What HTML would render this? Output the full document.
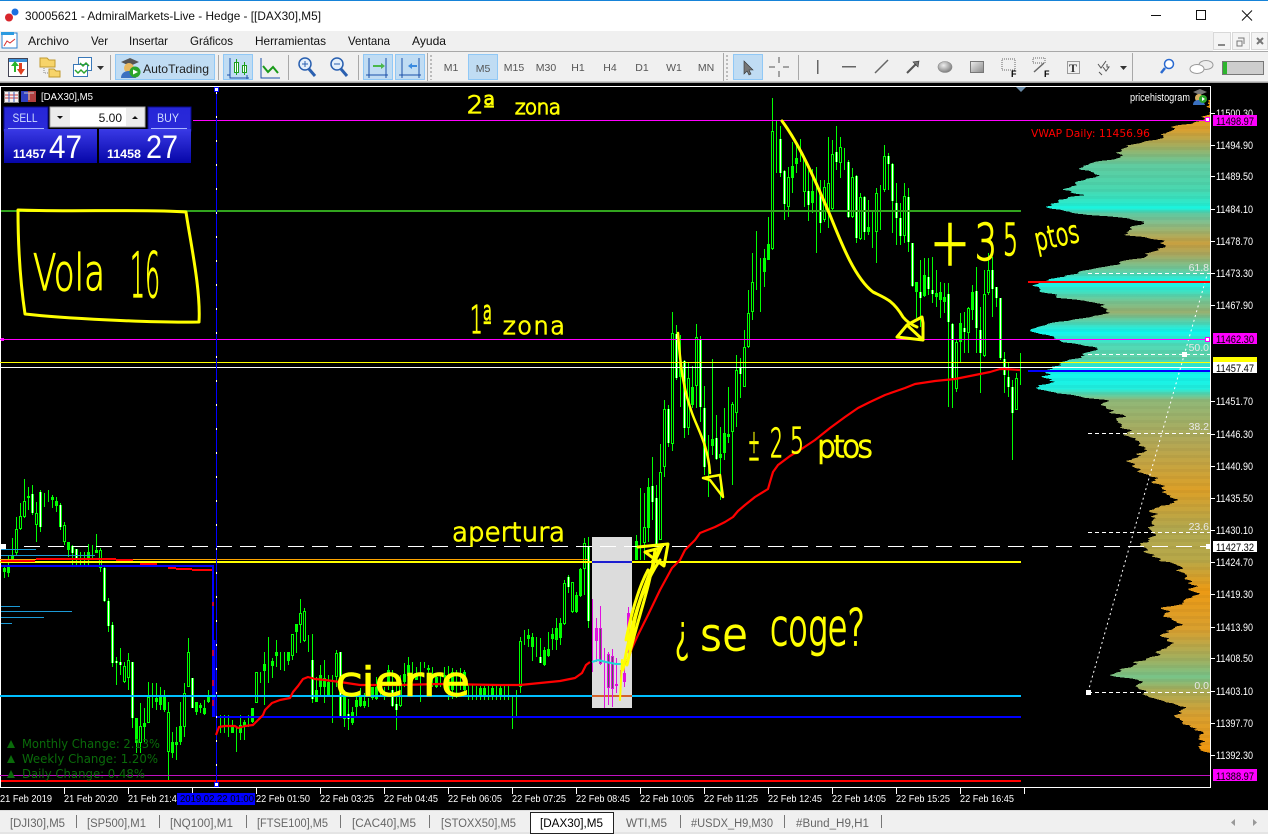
<!DOCTYPE html>
<html>
<head>
<meta charset="utf-8">
<title>30005621 - AdmiralMarkets-Live - Hedge</title>
<style>
html,body{margin:0;padding:0;background:#000;width:1268px;height:834px;overflow:hidden}
svg{display:block}
text{font-family:"Liberation Sans",sans-serif;white-space:pre}
.ax{font-size:11px;fill:#fff}
.tm{font-size:10.5px;fill:#fff}
.mn{font-size:12px;fill:#111}
.tf{font-size:10.5px;fill:#555}
.tb{font-size:11.5px;fill:#666}
.hw{font-family:"DejaVu Sans",sans-serif;font-weight:200;fill:#ff0;stroke:#ff0;stroke-width:1.2}
.cs{shape-rendering:crispEdges}
</style>
</head>
<body>
<svg width="1268" height="834" viewBox="0 0 1268 834" xmlns="http://www.w3.org/2000/svg">
<defs>
<linearGradient id="hg" gradientUnits="userSpaceOnUse" x1="0" y1="97" x2="0" y2="753">
<stop offset=".005" stop-color="#ee9a10"/><stop offset=".05" stop-color="#d9a030"/><stop offset=".073" stop-color="#a8ab5a"/><stop offset=".104" stop-color="#60cca0"/><stop offset=".142" stop-color="#48d8b0"/><stop offset=".16" stop-color="#30e8c8"/><stop offset=".169" stop-color="#18f5e0"/><stop offset=".178" stop-color="#60c8a0"/><stop offset=".19" stop-color="#80c090"/><stop offset=".223" stop-color="#c8a040"/><stop offset=".241" stop-color="#a8a860"/><stop offset=".267" stop-color="#60d0a8"/><stop offset=".282" stop-color="#10f8f0"/><stop offset=".297" stop-color="#40e0c0"/><stop offset=".309" stop-color="#70c898"/><stop offset=".328" stop-color="#98b070"/><stop offset=".358" stop-color="#10f8f0"/><stop offset=".378" stop-color="#50dcb8"/><stop offset=".398" stop-color="#60d0a8"/><stop offset=".416" stop-color="#10f8f0"/><stop offset=".444" stop-color="#20f0e0"/><stop offset=".462" stop-color="#90b878"/><stop offset=".523" stop-color="#b0a858"/><stop offset=".599" stop-color="#dca028"/><stop offset=".66" stop-color="#b0a850"/><stop offset=".706" stop-color="#b8a848"/><stop offset=".752" stop-color="#ec9a14"/><stop offset=".813" stop-color="#d8a030"/><stop offset=".858" stop-color="#a0b060"/><stop offset=".884" stop-color="#78c488"/><stop offset=".904" stop-color="#a8ac58"/><stop offset=".942" stop-color="#d8a030"/><stop offset=".995" stop-color="#f09810"/>
</linearGradient>
<linearGradient id="bb" x1="0" y1="0" x2="0" y2="1"><stop offset="0" stop-color="#3a3ae6"/><stop offset="1" stop-color="#0606a8"/></linearGradient>
<linearGradient id="bt" x1="0" y1="0" x2="0" y2="1"><stop offset="0" stop-color="#2626d8"/><stop offset="1" stop-color="#2a2ad8"/></linearGradient>
<linearGradient id="gb" x1="0" y1="0" x2="1" y2="1"><stop offset="0" stop-color="#eee"/><stop offset="1" stop-color="#888"/></linearGradient>
<radialGradient id="el" cx=".4" cy=".35" r=".7"><stop offset="0" stop-color="#eee"/><stop offset="1" stop-color="#777"/></radialGradient>
<pattern id="st" width="4" height="7" patternUnits="userSpaceOnUse"><rect width="4" height="3" fill="#000" fill-opacity=".035"/></pattern>
<filter id="jag" filterUnits="userSpaceOnUse" x="1000" y="90" width="260" height="680" color-interpolation-filters="sRGB">
<feTurbulence type="fractalNoise" baseFrequency="0.002 0.3" numOctaves="2" seed="4" result="n"/>
<feColorMatrix in="n" type="matrix" values="1 0 0 0 0  0 0 0 0 .5  0 0 0 0 0  0 0 0 0 1" result="m"/>
<feDisplacementMap in="SourceGraphic" in2="m" scale="22" xChannelSelector="R" yChannelSelector="G"/>
</filter>
<clipPath id="hc"><rect x="1000" y="90" width="210" height="680"/></clipPath>
</defs>

<!-- window chrome -->
<rect width="1268" height="834" fill="#000"/>
<rect width="1268" height="31" fill="#fff"/>
<rect width="1268" height="1" fill="#1683d8"/>
<circle cx="9" cy="17.5" r="4" fill="#d8262c"/><circle cx="15" cy="12" r="3.5" fill="#1b6fe0"/>
<text x="25" y="20" font-size="12" fill="#111" textLength="296" lengthAdjust="spacingAndGlyphs">30005621 - AdmiralMarkets-Live - Hedge - [[DAX30],M5]</text>
<path class="cs" d="M1151 15.5H1161" stroke="#111" fill="none"/>
<rect class="cs" x="1196.5" y="10.5" width="9" height="9" fill="none" stroke="#111"/>
<path d="M1242 10.5L1252 20.5M1252 10.5L1242 20.5" stroke="#111" fill="none"/>

<rect y="31" width="1268" height="52" fill="#f0f0f0"/>
<rect x="1213" y="31" width="55" height="20" fill="#fff"/>
<g class="cs" fill="#f4f4f4" stroke="#d8d8d8"><rect x="1213.5" y="32.5" width="17" height="17"/><rect x="1232.5" y="32.5" width="17" height="17"/><rect x="1251.5" y="32.5" width="16" height="17"/></g>
<path class="cs" d="M1218 45h7" stroke="#888" stroke-width="2"/>
<path d="M1238 38h6v6M1237 41h5v5h-5z" fill="none" stroke="#777"/>
<path d="M1257 38l6 6M1263 38l-6 6" stroke="#777" stroke-width="2"/>
<rect y="51" width="1268" height="1" fill="#a8a8a8"/>
<rect y="82" width="1268" height="1" fill="#a0a0a0"/>
<rect y="81" width="1268" height="1" fill="#c8c8c8"/>
<rect y="83" width="1268" height="3" fill="#000"/>
<!-- menu -->
<g>
<rect x="2" y="33" width="15" height="15" fill="#fff" stroke="#2a7fd0"/><rect x="1" y="32" width="13" height="3" fill="#2a9ae0"/><path d="M4 46l3-5 3 2 5-4" stroke="#d83030" fill="none"/>
<text class="mn" x="28" y="45" textLength="41" lengthAdjust="spacingAndGlyphs">Archivo</text><text class="mn" x="91" y="45" textLength="17" lengthAdjust="spacingAndGlyphs">Ver</text><text class="mn" x="129" y="45" textLength="39" lengthAdjust="spacingAndGlyphs">Insertar</text><text class="mn" x="190" y="45" textLength="43" lengthAdjust="spacingAndGlyphs">Gráficos</text><text class="mn" x="255" y="45" textLength="71" lengthAdjust="spacingAndGlyphs">Herramientas</text><text class="mn" x="348" y="45" textLength="42" lengthAdjust="spacingAndGlyphs">Ventana</text><text class="mn" x="412" y="45" textLength="34" lengthAdjust="spacingAndGlyphs">Ayuda</text>
</g>
<!-- toolbar -->
<g class="cs" fill="#c0dcf3" stroke="#90c8f6">
<rect x="115.5" y="54.5" width="99" height="25"/><rect x="223.5" y="54.5" width="29" height="25"/><rect x="363.5" y="54.5" width="29" height="25"/><rect x="395.5" y="54.5" width="29" height="25"/><rect x="468.5" y="54.5" width="29" height="25"/><rect x="733.5" y="54.5" width="29" height="25"/>
</g>
<g class="cs" fill="#a8a8a8"><rect x="110" y="55" width="1" height="25"/><rect x="218" y="55" width="1" height="25"/><rect x="288" y="55" width="1" height="25"/><rect x="358" y="55" width="1" height="25"/><rect x="723" y="53" width="1" height="28"/><rect x="798" y="55" width="1" height="25"/><rect x="1132" y="53" width="1" height="28"/><rect x="427" y="53" width="1" height="28"/></g>
<path class="cs" d="M431 55v25M727 55v25" stroke="#bbb" stroke-dasharray="2 2" stroke-width="2"/>
<!-- new chart -->
<rect x="8.5" y="58.5" width="19" height="18" fill="#fff" stroke="#445"/><rect x="9" y="59" width="18" height="3" fill="#3a8fd8"/>
<path d="M14 72v-6h-3l4-5 4 5h-3v6z" fill="#2cb52c"/><path d="M19 63h3v6h3l-4 6-4-6h2z" fill="#e04020"/>
<!-- folders -->
<path d="M40 58h7l2 2h6v7H40z" fill="#f7d46a" stroke="#c09a30"/><path d="M49 69h5l2 2h4v6H49z" fill="#f7d46a" stroke="#c09a30"/><path d="M44 68v5h4" stroke="#888" stroke-dasharray="1 1" fill="none"/>
<!-- templates -->
<rect x="78.5" y="57.5" width="13" height="13" fill="#fff" stroke="#3a78b8"/><rect x="73.5" y="64.5" width="14" height="12" fill="#fff" stroke="#3a78b8"/><path d="M75 70l3 3 3-3 3 3 3-3M80 63l3 3 3-3 3 3" stroke="#2ca52c" fill="none" stroke-width="1.5"/>
<path d="M97 66h7l-3.500 4z" fill="#333"/>
<!-- autotrading -->
<path d="M121 62l9-4 9 4-9 4z" fill="#555"/><circle cx="129" cy="68" r="5" fill="#e8b860"/><path d="M121 78c0-5 4-7 8-7s6 3 7 7z" fill="#3a70c0"/><circle cx="135" cy="72" r="5.500" fill="#2aa52a"/><path d="M133 69.500l5 2.500-5 2.500z" fill="#fff"/>
<text x="143" y="73" font-size="12" fill="#222" textLength="66" lengthAdjust="spacingAndGlyphs">AutoTrading</text>
<!-- chart type icons -->
<path d="M230 58v20h19M227 75h3M247 75v4" stroke="#1a4fa8" fill="none"/>
<g fill="#fff" stroke="#1fa01f"><rect x="234.500" y="62.500" width="4" height="10"/><rect x="242.500" y="65.500" width="4" height="7"/></g><path d="M236.500 59v16M244.500 62v13" stroke="#1fa01f"/>
<path d="M261 58v20h19" stroke="#1a4fa8" fill="none"/><path d="M263 66l5 6 5-5 5 6" stroke="#1a9a1a" stroke-width="2" fill="none"/>
<!-- zoom -->
<circle cx="305" cy="64" r="6" fill="#e4f0fb" stroke="#2a60b0" stroke-width="1.500"/><path d="M309 69l6 7" stroke="#2a60b0" stroke-width="3"/><path d="M302 64h6M305 61v6" stroke="#2a60b0"/>
<circle cx="337" cy="64" r="6" fill="#e4f0fb" stroke="#2a60b0" stroke-width="1.500"/><path d="M341 69l6 7" stroke="#2a60b0" stroke-width="3"/><path d="M334 64h6" stroke="#2a60b0"/>
<path d="M369 58v20M366 75h22M386 58v20" stroke="#1a4fa8" fill="none"/><path d="M373 65h8v-2l4 3-4 3v-2h-8z" fill="#4ab84a"/>
<path d="M402 58v20M399 75h22M419 58v20" stroke="#1a4fa8" fill="none"/><path d="M417 65h-5v-2l-4 3 4 3v-2h5z" fill="#3a8ae0"/>
<!-- timeframes -->
<g text-anchor="middle"><text class="tf" x="451" y="71">M1</text><text class="tf" x="483" y="72">M5</text><text class="tf" x="514" y="71">M15</text><text class="tf" x="546" y="71">M30</text><text class="tf" x="578" y="71">H1</text><text class="tf" x="610" y="71">H4</text><text class="tf" x="642" y="71">D1</text><text class="tf" x="674" y="71">W1</text><text class="tf" x="706" y="71">MN</text></g>
<!-- tools -->
<path d="M744 61v13l3-3 2 4 2-1-2-4h4z" fill="#777" stroke="#333" stroke-width=".6"/>
<path class="cs" d="M769 67h6M783 67h6M779 57v6M779 71v6" stroke="#555"/>
<rect x="817" y="60" width="1.500" height="14" fill="#666"/><rect x="842" y="66" width="14" height="1.500" fill="#666"/>
<path d="M875 73l13-13" stroke="#666" stroke-width="1.500"/>
<path d="M907 73l10-10" stroke="#555" stroke-width="2"/><path d="M919 61l-6 1 5 5z" fill="#777" stroke="#333" stroke-width=".6"/>
<ellipse cx="945" cy="67" rx="7" ry="5.500" fill="url(#el)" stroke="#888" stroke-width=".6"/>
<rect x="970.500" y="61.500" width="13" height="11" fill="url(#gb)" stroke="#777"/>
<rect x="1002" y="59" width="13" height="11" fill="none" stroke="#666" stroke-dasharray="1 1"/><text x="1011" y="77" font-size="9" font-weight="bold" fill="#000">F</text>
<rect x="1033" y="58" width="12" height="5" fill="none" stroke="#666" stroke-dasharray="1 1"/><path d="M1034 72l10-9" stroke="#666" stroke-width="1.500"/><text x="1044" y="77" font-size="9" font-weight="bold" fill="#000">F</text>
<rect x="1067.500" y="61.500" width="12" height="12" fill="none" stroke="#444" stroke-dasharray="1 1"/><text x="1069" y="72" font-size="12" font-weight="bold" style="font-family:'Liberation Serif',serif" fill="#333">T</text>
<path d="M1098 64l3 4 5-7M1103 67l3 4 3-4h-2v-3M1099 72l3 3" stroke="#555" fill="none"/>
<path d="M1120 66h7l-3.500 4z" fill="#333"/>
<circle cx="1169" cy="64" r="4.500" fill="#fff" stroke="#2a6ad0" stroke-width="1.500"/><path d="M1165 68l-4 5" stroke="#2a6ad0" stroke-width="2.500"/>
<ellipse cx="1206" cy="65" rx="7" ry="4.500" fill="#eee" stroke="#999"/><ellipse cx="1197" cy="69" rx="7" ry="4.500" fill="#fff" stroke="#999"/>
<rect x="1222.500" y="61.500" width="41" height="13" fill="#cdcdcd" stroke="#777"/><rect x="1223" y="62" width="4" height="12" fill="#2db52d"/>

<!-- chart frame -->
<g class="cs">
<rect y="86" width="1211" height="1" fill="#fff"/><rect y="87" width="1" height="701" fill="#fff"/><rect x="1210" y="86" width="1" height="702" fill="#fff"/><rect y="787" width="1211" height="1" fill="#fff"/>
</g>

<!-- candles -->
<g class="cs" transform="translate(.5 0)" fill="none">
<path stroke="#0f0" d="M4 567V578M8 555V577M12 538V563M16 517V555M20 503V530M24 479V518M28 487V510M32 485V515M36 502V542M40 490V532M44 493V507M48 490V502M52 495V508M56 497V512M60 503V530M64 522V545M68 542V557M72 545V565M76 549V565M80 552V565M84 552V565M88 544V565M92 545V560M96 534V553M100 548V572M104 567V602M108 598V632M112 622V667M116 657V685M120 648V675M124 662V683M128 653V690M132 662V728M136 718V753M140 703V753M144 708V742M148 682V723M152 683V708M156 683V710M160 687V710M164 690V712M168 702V780M172 732V758M176 727V760M180 702V745M184 683V737M188 638V687M192 678V708M196 702V715M200 703V713M204 700V715M208 690V703M212 690V700M216 720V733M220 715V733M224 715V733M228 715V737M232 720V733M236 727V752M240 715V740M244 720V740M248 715V727M252 708V723M256 672V703M260 672V683M264 652V705M268 637V683M272 658V678M276 640V667M280 652V670M284 652V671M288 652V665M292 635V660M296 625V653M300 599V643M304 608V642M308 635V652M312 634V703M316 677V702M320 665V695M324 660V703M328 675V697M332 675V723M336 650V687M340 652V718M344 690V727M348 699V730M352 707V725M356 697V718M360 688V707M364 693V708M368 698V707M372 687V700M376 677V700M380 682V695M384 687V700M388 665V690M392 670V707M396 683V730M400 675V707M404 663V687M408 657V687M412 662V680M416 667V680M420 662V702M424 662V668M428 665V677M432 667V687M436 673V688M440 673V687M444 667V680M448 666V700M452 668V699M456 670V698M460 668V690M464 670V695M468 684V700M472 684V700M476 686V700M480 686V700M484 686V700M488 686V700M492 686V700M496 686V700M500 686V700M504 686V700M508 686V700M512 697V729M516 690V717M520 637V693M524 630V645M528 629V647M532 633V661M536 637V657M540 638V663M544 647V666M548 632V657M552 628V650M556 618V650M560 618V645M564 580V625M568 575V593M572 582V613M576 592V613M580 568V597M584 538V595M588 537V628M636 535V560M640 488V560M644 493V560M648 478V542M652 457V520M656 485V547M660 444V540M664 400V477M668 405V447M672 312V451M676 325V380M680 335V407M684 360V438M688 363V435M692 366V408M696 324V408M700 336V422M704 386V475M708 435V497M712 359V455M716 415V460M720 427V500M724 408V460M728 387V443M732 402V485M736 355V427M740 358V398M744 330V387M748 290V348M752 253V320M756 231V290M760 258V312M764 249V287M768 217V260M772 98V250M776 120V173M780 126V177M784 170V220M788 167V217M792 142V193M796 145V173M800 139V162M804 157V207M808 170V221M812 169V213M816 167V253M820 180V233M824 180V222M828 137V228M832 140V210M836 126V170M840 137V178M844 148V170M848 160V218M852 168V218M856 175V243M860 193V240M864 196V240M868 200V235M872 210V248M876 188V263M880 185V230M884 145V192M888 153V190M892 163V233M896 183V245M900 203V245M904 183V243M908 188V252M912 243V287M916 282V318M920 260V327M924 258V297M928 258V295M932 257V303M936 270V307M940 282V318M944 283V313M948 283V407M952 323V408M956 340V392M960 313V362M964 312V353M968 307V353M972 285V320M976 267V353M980 307V393M984 270V357M988 253V295M992 257V317M996 287V307M1000 298V360M1004 352V393M1008 362V397M1012 380V460M1016 373V410M1020 353V385"/>
<!-- hollow -->
<path stroke="#0f0" stroke-width="3" d="M4 568V572M8 567V573M12 555V560M16 529V553M20 516V529M24 501V517M28 496V498M36 513V525M52 497V500M56 501V506M64 525V542M68 542V550M88 552V560M96 550V553M100 550V568M124 666V682M128 660V678M136 718V743M140 726V743M144 723V727M148 697V723M156 698V702M160 697V705M164 697V710M168 712V752M172 742V753M176 742V745M180 726V742M184 693V727M188 652V687M196 702V712M200 705V708M204 708V714M208 696V702M232 725V733M240 725V733M244 722V727M252 708V722M256 672V703M264 664V671M272 661V666M276 652V656M288 652V661M292 634V656M296 624V632M300 613V625M304 611V641M316 690V702M320 675V687M324 678V687M328 682V697M336 653V677M344 696V719M352 712V723M356 700V707M360 697V706M364 701V706M372 687V698M376 687V699M380 688V692M388 670V682M400 683V706M404 674V682M408 665V676M416 673V680M428 668V670M436 677V687M444 675V677M448 680V690M452 672V690M464 672V690M480 688V697M484 688V697M492 688V697M500 688V697M520 641V687M528 635V639M532 637V647M544 650V665M548 649V656M552 634V639M556 628V640M560 623V638M564 583V624M572 582V612M576 595V612M580 569V596M584 543V569M636 541V560M644 527V543M648 487V528M660 472V540M664 409V467M672 333V444M680 363V377M688 378V428M692 387V405M696 337V386M712 439V446M720 454V458M724 433V453M728 434V437M732 404V432M736 370V413M744 347V387M748 313V347M752 282V312M764 258V272M768 244V260M772 131V249M788 177V207M792 166V178M796 158V164M804 158V192M812 191V203M824 187V220M828 183V212M832 154V209M840 147V163M852 177V217M860 197V239M868 227V232M876 193V232M884 156V190M904 196V236M916 282V292M924 275V296M936 293V297M940 292V300M944 297V302M956 342V389M960 323V342M968 308V333M972 292V310M984 294V356M988 270V293M1016 378V410"/>
<path stroke="#000" d="M16 530V552M20 517V528M24 502V516M36 514V524M64 526V541M100 551V567M124 667V681M128 661V677M140 727V742M148 698V722M168 713V751M184 694V726M188 653V686M256 673V702M292 635V655M300 614V624M304 612V640M336 654V676M400 684V705M520 642V686M564 584V623M572 583V611M584 544V568M644 528V542M660 473V539M664 410V466M672 334V443M688 379V427M696 338V385M732 405V431M736 371V412M744 348V386M748 314V346M752 283V311M772 132V248M788 178V206M804 159V191M824 188V219M828 184V211M832 155V208M840 148V162M852 178V216M860 198V238M876 194V231M884 157V189M904 197V235M956 343V388M968 309V332M984 295V355M988 271V292M1016 379V409"/>
<!-- white -->
<path stroke="#0f0" stroke-width="3" d="M32 494V513M40 492V527M60 505V527M72 546V553M76 549V560M104 568V601M108 601V626M112 625V663M116 661V663M120 662V665M132 662V718M192 678V708M340 652V717M312 660V699M348 714V719M396 704V710M392 690V706M540 657V663M568 577V587M588 546V621M652 486V502M656 498V545M668 409V443M676 334V378M684 361V428M700 339V407M704 408V467M716 438V459M740 368V374M780 139V173M784 171V204M808 191V205M820 193V223M836 152V162M848 162V217M856 176V238M864 197V232M888 156V164M892 164V201M896 203V218M900 218V236M908 197V242M912 243V286M920 292V298M928 277V289M932 290V294M948 294V322M952 324V378M964 328V332M976 291V328M980 330V353M992 270V289M996 287V298M1000 298V358M1004 359V375M1008 377V387M1012 387V413"/>
<path stroke="#fff" d="M32 494V513M40 492V527M60 505V527M72 546V553M76 549V560M104 568V601M108 601V626M112 625V663M116 661V663M120 662V665M132 662V718M192 678V708M340 652V717M312 660V699M348 714V719M396 704V710M392 690V706M540 657V663M568 577V587M588 546V621M652 486V502M656 498V545M668 409V443M676 334V378M684 361V428M700 339V407M704 408V467M716 438V459M740 368V374M780 139V173M784 171V204M808 191V205M820 193V223M836 152V162M848 162V217M856 176V238M864 197V232M888 156V164M892 164V201M896 203V218M900 218V236M908 197V242M912 243V286M920 292V298M928 277V289M932 290V294M948 294V322M952 324V378M964 328V332M976 291V328M980 330V353M992 270V289M996 287V298M1000 298V358M1004 359V375M1008 377V387M1012 387V413"/>
</g>

<!-- histogram -->
<g clip-path="url(#hc)"><g filter="url(#jag)" shape-rendering="crispEdges">
<path fill="url(#hg)" d="M1240 97H1208V115H1203V120H1200L1173 128 1160 137 1150 140 1130 145 1120 150 1120 153 1128 155 1100 162 1077 168 1090 172 1100 175 1083 180 1063 190 1083 195 1060 200 1047 207 1060 210 1087 215 1123 218 1150 222 1128 228 1130 235 1167 242 1163 250 1140 257 1113 265 1093 270 1070 275 1047 280 1032 285 1043 292 1063 298 1100 303 1103 308 1113 313 1083 318 1050 323 1027 331 1047 335 1063 342 1100 348 1083 355 1063 362 1048 370 1043 377 1057 382 1032 388 1057 393 1103 400 1107 410 1123 417 1113 420 1127 430 1133 440 1147 450 1133 458 1130 462 1143 470 1153 480 1163 490 1177 500 1153 512 1152 523 1155 537 1140 545 1155 557 1180 568 1187 580 1197 593 1183 602 1163 610 1172 620 1180 627 1160 637 1173 643 1155 655 1128 667 1112 677 1143 680 1140 688 1150 697 1180 707 1175 718 1193 727 1203 737 1203 750 1210 753H1240Z"/>
<path fill="url(#st)" d="M1240 97H1208V115H1203V120H1200L1173 128 1160 137 1150 140 1130 145 1120 150 1120 153 1128 155 1100 162 1077 168 1090 172 1100 175 1083 180 1063 190 1083 195 1060 200 1047 207 1060 210 1087 215 1123 218 1150 222 1128 228 1130 235 1167 242 1163 250 1140 257 1113 265 1093 270 1070 275 1047 280 1032 285 1043 292 1063 298 1100 303 1103 308 1113 313 1083 318 1050 323 1027 331 1047 335 1063 342 1100 348 1083 355 1063 362 1048 370 1043 377 1057 382 1032 388 1057 393 1103 400 1107 410 1123 417 1113 420 1127 430 1133 440 1147 450 1133 458 1130 462 1143 470 1153 480 1163 490 1177 500 1153 512 1152 523 1155 537 1140 545 1155 557 1180 568 1187 580 1197 593 1183 602 1163 610 1172 620 1180 627 1160 637 1173 643 1155 655 1128 667 1112 677 1143 680 1140 688 1150 697 1180 707 1175 718 1193 727 1203 737 1203 750 1210 753H1240Z"/>
</g></g>

<!-- fib -->
<g class="cs" stroke="#fff" fill="none" stroke-dasharray="4 3">
<path d="M1088 273.500H1210M1088 354.500H1210M1088 433.500H1210M1088 532.500H1210M1088 692.500H1210"/>
</g>
<path d="M1088 692L1207 275" stroke="#fff" stroke-dasharray="2 3" fill="none"/>
<rect x="1086" y="690" width="5" height="5" fill="#fff"/><rect x="1182" y="352" width="5" height="5" fill="#fff"/>
<g font-size="10.5" fill="#e8e8e8" text-anchor="end"><text x="1209" y="271">61.8</text><text x="1209" y="351">50.0</text><text x="1209" y="430">38.2</text><text x="1209" y="530">23.6</text><text x="1209" y="689">0.0</text></g>

<!-- horizontal lines -->
<g class="cs" fill="none">
<path stroke="#32a41e" stroke-width="2" d="M1 211H1021"/>
<path stroke="#f0f" d="M193 120.500H1210M0 339.500H1210"/>
<path stroke="#ff0" d="M0 362.500H1210"/>
<path stroke="#fff" d="M0 367.500H1210"/>
<path stroke="#ff0000" stroke-width="2" d="M1028 282H1210M1 781H1021"/>
<path stroke="#0000ff" stroke-width="2" d="M1028 371H1210"/>
<path stroke="#1c9ad6" d="M1 549.500H36M1 555.500H95M1 606.500H20M1 611.500H72M1 617.500H44M1 623.500H12"/>
<path stroke="#ffa500" d="M0 559.500H588"/>
<path stroke="#ff0" stroke-width="2" d="M0 562H592M632 562H1021"/>
<path stroke="#fff" stroke-dasharray="16 8" stroke-dashoffset="0" d="M24 546.500H1210"/>
<path stroke="#ff0000" stroke-width="2" d="M1 561H35M36 559H116M116 560H133M140 564H157M168 568H176M176 569H192M192 570H213"/>
<path stroke="#0000ff" stroke-width="2" d="M1 566H214M213 566V717M216 717H1021"/>
<path stroke="#0000ff" stroke-width="3" d="M214 640V717"/>
<path stroke="#00bfff" stroke-width="2" d="M0 696H1021"/>
<path stroke="#c010c0" d="M0 775.500H1210"/>
</g>
<rect x="0" y="544" width="6" height="5" fill="#fff"/>
<g class="cs" fill="none"><path stroke="#0000ff" d="M216.500 87V787"/><path stroke="#fff" stroke-dasharray="2 22" d="M216.500 92V787"/></g>
<rect x="214.500" y="87.500" width="4" height="4" fill="#fff" stroke="#00f"/><rect x="214.500" y="782.500" width="4" height="4" fill="#fff" stroke="#00f"/>

<!-- gray box -->
<rect x="592" y="537" width="40" height="171" fill="#dcdcdc"/>
<path class="cs" d="M592 562H632" stroke="#1e1ed0" stroke-width="2"/>
<path class="cs" d="M592 696H632" stroke="#d4622a" stroke-width="2"/>
<path class="cs" d="M600 546.500H632" stroke="#fff" stroke-dasharray="16 8"/>
<g class="cs" transform="translate(.5 0)" fill="none">
<path stroke="#e010e0" d="M592 599V672M596 618V662M600 606V665M604 648V708M608 652V705M612 649V707M616 658V693M620 670V693M624 663V687M628 607V660"/>
<path stroke="#e010e0" stroke-width="3" d="M596 628V641M600 628V664M608 654V688M612 656V689M616 684V686M624 673V682M628 613V653"/>
<path stroke="#555" d="M600 629V663M608 655V687M612 657V688"/>
</g>
<path d="M592 662L598 660 606 662 616 664 623 664" stroke="#20d8d8" stroke-width="2" fill="none"/>

<!-- VWAP red -->
<path fill="none" stroke="#f00" stroke-width="2.200" stroke-linejoin="round" d="M216 735L219 727 225 726 235 726 238 728 245 726 253 725 258 720 263 715 265 710 272 703 280 700 290 698 293 692 298 686 303 679 308 677 315 679 325 680 340 682 360 685 400 685 440 684 500 685 520 685 540 683 560 681 575 678 582 673 586 665 590 662M626 665L632 648 638 635 648 615 660 590 672 568 680 560 685 550 695 540 700 533 715 527 725 522 733 517 738 511 745 505 755 497 768 489 770 482 773 472 778 465 790 456 800 450 815 440 830 428 845 417 858 408 870 402 885 395 905 388 915 384 935 381 955 379 975 375 990 372 1000 369 1005 369 1020 370"/>
<path d="M213 602v4M213 650v6M213 680v6M213 700v6" stroke="#f00" stroke-width="1.500"/>

<!-- hand drawn strokes -->
<g fill="none" stroke="#ff0" stroke-linecap="round" stroke-linejoin="round">
<path stroke-width="3" d="M782 121C800 145 815 180 830 215C842 245 855 278 873 292C885 298 893 300 903 317C907 322 912 325 917 327"/>
<path stroke-width="3" d="M897 337L923 340 923 323 922 317 907 325 897 337M907 325L923 340"/>
<path stroke-width="2.500" d="M678 333C680 360 682 385 692 413C698 430 708 445 710 473M703 478L720 475 723 497 710 480 703 478"/>
<path stroke-width="3" d="M18 210C60 212 150 209 186 212C190 240 201 290 199 322C150 323 60 318 25 314C20 280 18 240 18 210Z"/>
<path stroke-width="3" d="M623 670C630 630 640 590 662 546M627 665C636 622 650 590 655 550M630 650C634 612 645 582 660 560M626 640C632 610 640 585 648 570"/>
<path stroke-width="3" d="M638 547L668 544 664 566 645 552 660 548 652 562"/>
<path stroke-width="2" d="M620 700L622 660"/>
</g>
<!-- hand written annotations -->
<text class="hw" x="467" y="113" font-size="24" textLength="28" lengthAdjust="spacingAndGlyphs">2ª</text>
<text class="hw" x="515" y="114" font-size="20" textLength="46" lengthAdjust="spacing">zona</text>
<text class="hw" x="33" y="290" font-size="50" textLength="72" lengthAdjust="spacingAndGlyphs">Vola</text>
<text class="hw" x="130" y="297" font-size="62" textLength="30" lengthAdjust="spacingAndGlyphs">16</text>
<text class="hw" x="470" y="333" font-size="38" textLength="22" lengthAdjust="spacingAndGlyphs">1ª</text>
<text class="hw" x="503" y="334" font-size="24" textLength="62" lengthAdjust="spacing">zona</text>
<text class="hw" x="930" y="265" font-size="66" textLength="40" lengthAdjust="spacingAndGlyphs" style="stroke-width:1.500">+</text>
<text class="hw" x="975" y="260" font-size="50" textLength="22" lengthAdjust="spacingAndGlyphs" style="stroke-width:1.500">3</text>
<text class="hw" x="1003" y="255" font-size="44" textLength="15" lengthAdjust="spacingAndGlyphs" style="stroke-width:1.500">5</text>
<text class="hw" x="1035" y="246" font-size="30" textLength="45" lengthAdjust="spacingAndGlyphs" transform="rotate(-12 1057 240)" style="stroke-width:1.500">ptos</text>
<text class="hw" x="748" y="460" font-size="44" textLength="12" lengthAdjust="spacingAndGlyphs">±</text>
<text class="hw" x="770" y="457" font-size="40" textLength="13" lengthAdjust="spacingAndGlyphs">2</text>
<text class="hw" x="790" y="453" font-size="36" textLength="14" lengthAdjust="spacingAndGlyphs">5</text>
<text class="hw" x="817" y="457" font-size="30" textLength="56" lengthAdjust="spacing" style="stroke-width:1.500">ptos</text>
<text class="hw" x="452" y="541" font-size="26" textLength="113" lengthAdjust="spacingAndGlyphs">apertura</text>
<text class="hw" x="336" y="695" font-size="38" textLength="134" lengthAdjust="spacingAndGlyphs" style="stroke-width:2.500">cierre</text>
<text class="hw" x="675" y="650" font-size="50" textLength="15" lengthAdjust="spacingAndGlyphs" style="stroke-width:1.800">¿</text>
<text class="hw" x="700" y="650" font-size="44" textLength="48" lengthAdjust="spacingAndGlyphs" style="stroke-width:1.800">se</text>
<text class="hw" x="770" y="645" font-size="50" textLength="95" lengthAdjust="spacingAndGlyphs" style="stroke-width:1.800">coge?</text>

<!-- change info -->
<g fill="#0a6b0a" font-size="12" style="font-family:'DejaVu Sans',sans-serif">
<path d="M7 748l4-8 4 8zM7 763l4-8 4 8zM7 778l4-8 4 8z"/>
<text x="22" y="748" textLength="138" lengthAdjust="spacingAndGlyphs" style="font-family:'DejaVu Sans',sans-serif">Monthly Change: 2.13%</text>
<text x="22" y="763" textLength="136" lengthAdjust="spacingAndGlyphs" style="font-family:'DejaVu Sans',sans-serif">Weekly Change: 1.20%</text>
<text x="22" y="778" textLength="123" lengthAdjust="spacingAndGlyphs" style="font-family:'DejaVu Sans',sans-serif">Daily Change: 0.48%</text>
</g>

<!-- top chart labels -->
<rect x="4.500" y="91.500" width="14" height="11" fill="#f4f0f0" stroke="#888"/><path class="cs" d="M5 95h13M5 98h13" stroke="#d04040"/><path class="cs" d="M9 92v10M14 92v10" stroke="#4060c0"/>
<rect x="21" y="91" width="8" height="11" fill="#3040c0"/><rect x="28" y="91" width="8" height="11" fill="#b04040"/><path d="M24 93h10M29 93v7" stroke="#ccc"/>
<text x="41" y="100" font-size="10.500" fill="#fff" textLength="52" lengthAdjust="spacingAndGlyphs">[DAX30],M5</text>
<!-- trade panel -->
<rect x="4" y="107" width="44" height="24" fill="url(#bt)" stroke="#0a0a90"/>
<rect x="148" y="107" width="43" height="24" fill="url(#bt)" stroke="#0a0a90"/>
<path class="cs" d="M8 128.500H44M151 128.500H187" stroke="#a8b4ff"/>
<text x="25" y="122" font-size="12" fill="#cfdcff" text-anchor="middle" textLength="25" lengthAdjust="spacingAndGlyphs">SELL</text>
<text x="168" y="122" font-size="12" fill="#cfdcff" text-anchor="middle" textLength="22" lengthAdjust="spacingAndGlyphs">BUY</text>
<rect x="50" y="107" width="95" height="20" fill="#ececec" stroke="#aaa"/>
<rect x="70" y="108" width="56" height="18" fill="#fff"/>
<path d="M57 116h6l-3 3z" fill="#111"/><path d="M132 119h6l-3-3z" fill="#111"/>
<text x="122" y="122" font-size="12" fill="#111" text-anchor="end">5.00</text>
<rect x="4" y="129" width="93" height="34" fill="url(#bb)"/>
<rect x="99" y="129" width="92" height="34" fill="url(#bb)"/>
<text x="13" y="158" font-size="12" font-weight="bold" fill="#fff" textLength="33" lengthAdjust="spacingAndGlyphs">11457</text>
<text x="49" y="158" font-size="32" fill="#fff" textLength="33" lengthAdjust="spacingAndGlyphs">47</text>
<text x="107" y="158" font-size="12" font-weight="bold" fill="#fff" textLength="34" lengthAdjust="spacingAndGlyphs">11458</text>
<text x="146" y="158" font-size="32" fill="#fff" textLength="32" lengthAdjust="spacingAndGlyphs">27</text>
<!-- right top -->
<path d="M1016 87h10l-5 5z" fill="#6a8ba8"/>
<text x="1130" y="101" font-size="11" fill="#fff" textLength="60" lengthAdjust="spacingAndGlyphs">pricehistogram</text>
<path d="M1193 92l7-3 7 3-7 3z" fill="#777"/><circle cx="1199" cy="98" r="4" fill="#d8b060"/><path d="M1193 105c0-4 3-5 6-5s5 2 6 5z" fill="#3a70c0"/><circle cx="1203" cy="99" r="4" fill="#2aa52a"/><path d="M1202 97l3 2-3 2z" fill="#fff"/>
<text x="1031" y="137" font-size="10.500" fill="#f00" textLength="119" lengthAdjust="spacingAndGlyphs" style="font-family:'DejaVu Sans',sans-serif">VWAP Daily: 11456.96</text>

<!-- price axis -->
<path class="cs" stroke="#fff" d="M1211 113.500h4M1211 145.500h4M1211 176.500h4M1211 209.500h4M1211 241.500h4M1211 273.500h4M1211 305.500h4M1211 401.500h4M1211 434.500h4M1211 466.500h4M1211 498.500h4M1211 530.500h4M1211 562.500h4M1211 594.500h4M1211 627.500h4M1211 658.500h4M1211 691.500h4M1211 723.500h4M1211 755.500h4"/>
<g>
<text class="ax" x="1216" y="117" textLength="37" lengthAdjust="spacingAndGlyphs">11500.30</text>
<text class="ax" x="1216" y="149" textLength="37" lengthAdjust="spacingAndGlyphs">11494.90</text>
<text class="ax" x="1216" y="180" textLength="37" lengthAdjust="spacingAndGlyphs">11489.50</text>
<text class="ax" x="1216" y="213" textLength="37" lengthAdjust="spacingAndGlyphs">11484.10</text>
<text class="ax" x="1216" y="245" textLength="37" lengthAdjust="spacingAndGlyphs">11478.70</text>
<text class="ax" x="1216" y="277" textLength="37" lengthAdjust="spacingAndGlyphs">11473.30</text>
<text class="ax" x="1216" y="309" textLength="37" lengthAdjust="spacingAndGlyphs">11467.90</text>
<text class="ax" x="1216" y="405" textLength="37" lengthAdjust="spacingAndGlyphs">11451.70</text>
<text class="ax" x="1216" y="438" textLength="37" lengthAdjust="spacingAndGlyphs">11446.30</text>
<text class="ax" x="1216" y="470" textLength="37" lengthAdjust="spacingAndGlyphs">11440.90</text>
<text class="ax" x="1216" y="502" textLength="37" lengthAdjust="spacingAndGlyphs">11435.50</text>
<text class="ax" x="1216" y="534" textLength="37" lengthAdjust="spacingAndGlyphs">11430.10</text>
<text class="ax" x="1216" y="566" textLength="37" lengthAdjust="spacingAndGlyphs">11424.70</text>
<text class="ax" x="1216" y="598" textLength="37" lengthAdjust="spacingAndGlyphs">11419.30</text>
<text class="ax" x="1216" y="631" textLength="37" lengthAdjust="spacingAndGlyphs">11413.90</text>
<text class="ax" x="1216" y="662" textLength="37" lengthAdjust="spacingAndGlyphs">11408.50</text>
<text class="ax" x="1216" y="695" textLength="37" lengthAdjust="spacingAndGlyphs">11403.10</text>
<text class="ax" x="1216" y="727" textLength="37" lengthAdjust="spacingAndGlyphs">11397.70</text>
<text class="ax" x="1216" y="759" textLength="37" lengthAdjust="spacingAndGlyphs">11392.30</text>
</g>
<g class="cs"><rect x="1213" y="115" width="44" height="11" fill="#f0f"/><rect x="1213" y="333" width="44" height="11" fill="#f0f"/><rect x="1213" y="357" width="44" height="6" fill="#ff0"/><rect x="1213" y="362" width="44" height="11" fill="#fff"/><rect x="1213" y="541" width="44" height="11" fill="#fff"/><rect x="1213" y="769" width="44" height="12" fill="#f0f"/></g>
<g font-size="11" fill="#000">
<text x="1216" y="125" textLength="38" lengthAdjust="spacingAndGlyphs">11498.97</text>
<text x="1216" y="343" textLength="38" lengthAdjust="spacingAndGlyphs">11462.30</text>
<text x="1216" y="372" textLength="38" lengthAdjust="spacingAndGlyphs">11457.47</text>
<text x="1216" y="551" textLength="38" lengthAdjust="spacingAndGlyphs">11427.32</text>
<text x="1216" y="780" textLength="38" lengthAdjust="spacingAndGlyphs">11388.97</text>
</g>
<rect x="1205.500" y="117.500" width="4" height="4" fill="#fff" stroke="#f0f"/><rect x="1205.500" y="337.500" width="4" height="4" fill="#fff" stroke="#f0f"/><rect x="1" y="338" width="3" height="3" fill="#f0f"/><rect x="1206" y="544" width="5" height="5" fill="#fff"/>

<!-- time axis -->
<path class="cs" stroke="#fff" d="M64.500 788v6M128.500 788v6M192.500 788v6M256.500 788v6M320.500 788v6M384.500 788v6M448.500 788v6M512.500 788v6M576.500 788v6M640.500 788v6M704.500 788v6M768.500 788v6M832.500 788v6M896.500 788v6M960.500 788v6M1024.500 788v6"/>
<g>
<text class="tm" x="0" y="802" textLength="52" lengthAdjust="spacingAndGlyphs">21 Feb 2019</text>
<text class="tm" x="64" y="802" textLength="54" lengthAdjust="spacingAndGlyphs">21 Feb 20:20</text>
<text class="tm" x="128" y="802" textLength="54" lengthAdjust="spacingAndGlyphs">21 Feb 21:40</text>
<rect x="177" y="793" width="78" height="12" fill="#00f"/>
<text x="180" y="802" font-size="10.500" fill="#000" textLength="74" lengthAdjust="spacingAndGlyphs">2019.02.22 01:00</text>
<text class="tm" x="256" y="802" textLength="54" lengthAdjust="spacingAndGlyphs">22 Feb 01:50</text>
<text class="tm" x="320" y="802" textLength="54" lengthAdjust="spacingAndGlyphs">22 Feb 03:25</text>
<text class="tm" x="384" y="802" textLength="54" lengthAdjust="spacingAndGlyphs">22 Feb 04:45</text>
<text class="tm" x="448" y="802" textLength="54" lengthAdjust="spacingAndGlyphs">22 Feb 06:05</text>
<text class="tm" x="512" y="802" textLength="54" lengthAdjust="spacingAndGlyphs">22 Feb 07:25</text>
<text class="tm" x="576" y="802" textLength="54" lengthAdjust="spacingAndGlyphs">22 Feb 08:45</text>
<text class="tm" x="640" y="802" textLength="54" lengthAdjust="spacingAndGlyphs">22 Feb 10:05</text>
<text class="tm" x="704" y="802" textLength="54" lengthAdjust="spacingAndGlyphs">22 Feb 11:25</text>
<text class="tm" x="768" y="802" textLength="54" lengthAdjust="spacingAndGlyphs">22 Feb 12:45</text>
<text class="tm" x="832" y="802" textLength="54" lengthAdjust="spacingAndGlyphs">22 Feb 14:05</text>
<text class="tm" x="896" y="802" textLength="54" lengthAdjust="spacingAndGlyphs">22 Feb 15:25</text>
<text class="tm" x="960" y="802" textLength="54" lengthAdjust="spacingAndGlyphs">22 Feb 16:45</text>
</g>
<rect x="1211" y="788" width="57" height="22" fill="#000"/>

<!-- tabs -->
<rect y="810" width="1268" height="1" fill="#ddd"/>
<rect y="811" width="1268" height="23" fill="#f0f0f0"/>
<rect y="832" width="1268" height="2" fill="#e4e4e4"/>
<rect class="cs" x="530.500" y="812.500" width="83" height="21" fill="#fff" stroke="#222"/>
<g class="cs" fill="#777"><rect x="76" y="815" width="1" height="13"/><rect x="159" y="815" width="1" height="13"/><rect x="246" y="815" width="1" height="13"/><rect x="340" y="815" width="1" height="13"/><rect x="429" y="815" width="1" height="13"/><rect x="680" y="815" width="1" height="13"/><rect x="784" y="815" width="1" height="13"/><rect x="881" y="815" width="1" height="13"/></g>
<g>
<text class="tb" x="10" y="827" textLength="55" lengthAdjust="spacingAndGlyphs">[DJI30],M5</text>
<text class="tb" x="87" y="827" textLength="59" lengthAdjust="spacingAndGlyphs">[SP500],M1</text>
<text class="tb" x="170" y="827" textLength="63" lengthAdjust="spacingAndGlyphs">[NQ100],M1</text>
<text class="tb" x="257" y="827" textLength="71" lengthAdjust="spacingAndGlyphs">[FTSE100],M5</text>
<text class="tb" x="352" y="827" textLength="64" lengthAdjust="spacingAndGlyphs">[CAC40],M5</text>
<text class="tb" x="441" y="827" textLength="75" lengthAdjust="spacingAndGlyphs">[STOXX50],M5</text>
<text x="540" y="827" font-size="11.500" fill="#000" textLength="63" lengthAdjust="spacingAndGlyphs">[DAX30],M5</text>
<text class="tb" x="626" y="827" textLength="41" lengthAdjust="spacingAndGlyphs">WTI,M5</text>
<text class="tb" x="691" y="827" textLength="82" lengthAdjust="spacingAndGlyphs">#USDX_H9,M30</text>
<text class="tb" x="796" y="827" textLength="73" lengthAdjust="spacingAndGlyphs">#Bund_H9,H1</text>
</g>
<path d="M1235 819l-4 3.500 4 3.500zM1253 819l4 3.500-4 3.500z" fill="#999"/>
</svg>
</body>
</html>
